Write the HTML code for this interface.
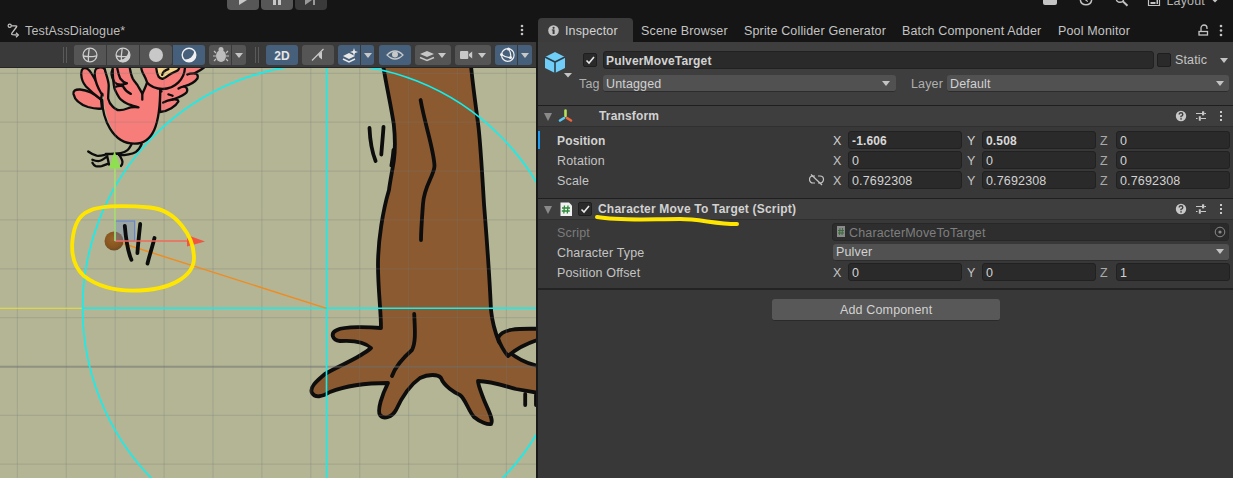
<!DOCTYPE html>
<html><head><meta charset="utf-8">
<style>
*{margin:0;padding:0;box-sizing:border-box}
html,body{width:1233px;height:478px;overflow:hidden;background:#151515;font-family:"Liberation Sans",sans-serif;font-size:12.5px;letter-spacing:0.15px;color:#c4c4c4}
.a{position:absolute}
.t{position:absolute;white-space:nowrap;line-height:14px}
.b{font-weight:bold;font-size:12px}
.btn{position:absolute;top:45px;height:20px;background:#585858;border-radius:3px}
.act{background:#46607c}
.fld{position:absolute;height:18px;background:#2a2a2a;border:1px solid #212121;border-radius:3px}
.dd{position:absolute;height:17px;background:#515151;border-bottom:1px solid #2c2c2c;border-radius:3px}
.lbl{position:absolute;white-space:nowrap;line-height:14px;color:#c4c4c4}
.ftxt{position:absolute;left:3px;top:1px;line-height:14px;color:#d2d2d2;white-space:nowrap}
.tri{position:absolute;width:0;height:0;border-left:4px solid transparent;border-right:4px solid transparent;border-top:5px solid #c4c4c4}
svg{position:absolute;overflow:hidden}
</style></head><body>
<!-- top bar -->
<div class="a" style="left:227px;top:-4px;width:32px;height:14px;background:#575757;border-radius:4px"></div>
<div class="a" style="left:261px;top:-4px;width:32px;height:14px;background:#575757;border-radius:4px"></div>
<div class="a" style="left:295px;top:-4px;width:32px;height:14px;background:#3a3a3a;border-radius:4px"></div>
<svg style="left:227px;top:0" width="100" height="10">
<path d="M 12,0 L 20,0 L 12,5 Z" fill="#c8c8c8"/>
<rect x="46" y="0" width="3" height="5" fill="#c8c8c8"/><rect x="51" y="0" width="3" height="5" fill="#c8c8c8"/>
<path d="M 78,0 L 85,0 L 78,5 Z" fill="#9a9a9a"/><rect x="86" y="0" width="2" height="5" fill="#9a9a9a"/>
</svg>
<svg style="left:1040px;top:0" width="193" height="10">
<path d="M 3,0 L 17,0 L 17,3 Q 17,5 15,5 L 5,5 Q 3,5 3,3 Z" fill="#c4c4c4"/>
<path d="M 40.3,0 A 5.8,5.8 0 0 0 51.7,0" fill="none" stroke="#c4c4c4" stroke-width="1.5"/><path d="M 45.5,0 L 47.5,1.5 L 46.5,0 Z" fill="#c4c4c4" stroke="#c4c4c4" stroke-width="1"/>
<circle cx="80" cy="-1.5" r="3.8" fill="none" stroke="#c4c4c4" stroke-width="1.4"/><path d="M 83,1.5 L 87.5,5.8" stroke="#c4c4c4" stroke-width="2"/>
<path d="M 108.5,0 V 5.5 H 119.5 V 0" fill="none" stroke="#c4c4c4" stroke-width="1.2"/><rect x="110.5" y="2" width="5" height="2" fill="#c4c4c4"/><rect x="116.5" y="0" width="1.5" height="4" fill="#c4c4c4"/>
<text x="126.5" y="4.5" font-family="Liberation Sans" font-size="12.5" letter-spacing="0.15" fill="#b4b4b4">Layout</text>
<path d="M 172.5,0 L 177.5,0 L 175,2.5 Z" fill="#c4c4c4"/>
</svg>

<!-- scene tab -->
<svg style="left:6px;top:23px" width="16" height="16">
<circle cx="3.7" cy="2.8" r="1.6" fill="none" stroke="#c4c4c4" stroke-width="1.2"/>
<path d="M 5.3,2.8 H 10 Q 11.2,2.8 10.5,4 L 5.9,10.2 Q 5.2,11.5 6.6,11.7 L 10.8,12" fill="none" stroke="#c4c4c4" stroke-width="1.3" stroke-linejoin="round"/>
<path d="M 10,9.8 L 12.3,12 L 10,14.2" fill="none" stroke="#c4c4c4" stroke-width="1.3"/>
</svg>
<div class="t" style="left:25px;top:24px;color:#bdbdbd">TestAssDialogue*</div>
<svg style="left:519px;top:24px" width="6" height="13"><circle cx="3" cy="2" r="1.3" fill="#c4c4c4"/><circle cx="3" cy="6" r="1.3" fill="#c4c4c4"/><circle cx="3" cy="10" r="1.3" fill="#c4c4c4"/></svg>

<!-- scene toolbar -->
<div class="a" style="left:0;top:42px;width:536px;height:26px;background:#3a3a3a;border-bottom:1px solid #262626"></div>
<div class="a" style="left:63px;top:47px;width:1px;height:16px;background:#5a5a5a"></div>
<div class="a" style="left:66px;top:47px;width:1px;height:16px;background:#5a5a5a"></div>
<div class="btn" style="left:74px;width:98px;background:#555555"></div>
<div class="btn act" style="left:173px;width:32px;border-radius:0 3px 3px 0"></div>
<div class="a" style="left:106px;top:45px;width:1px;height:20px;background:#3a3a3a"></div>
<div class="a" style="left:139px;top:45px;width:1px;height:20px;background:#3a3a3a"></div>
<div class="a" style="left:172px;top:45px;width:1px;height:20px;background:#3a3a3a"></div>
<div class="btn" style="left:74px;width:4px;border-radius:3px 0 0 3px;background:#555"></div>
<div class="btn" style="left:209px;width:37px;background:#555555"></div>
<div class="a" style="left:231px;top:45px;width:1px;height:20px;background:#3a3a3a"></div>
<div class="a" style="left:255px;top:47px;width:1px;height:16px;background:#5a5a5a"></div>
<div class="a" style="left:258px;top:47px;width:1px;height:16px;background:#5a5a5a"></div>
<div class="btn act" style="left:266px;width:32px"></div>
<div class="btn" style="left:302px;width:32px;background:#555555"></div>
<div class="btn act" style="left:338px;width:36px"></div>
<div class="a" style="left:360px;top:45px;width:1px;height:20px;background:#3a3a3a"></div>
<div class="btn act" style="left:379px;width:32px"></div>
<div class="btn" style="left:415px;width:36px;background:#555555"></div>
<div class="btn" style="left:455px;width:36px;background:#555555"></div>
<div class="btn act" style="left:495px;width:37px"></div>
<div class="a" style="left:517px;top:45px;width:1px;height:20px;background:#3a3a3a"></div>
<svg style="left:0;top:42px" width="536" height="25" viewBox="0 42 536 25">
<g fill="none" stroke="#cfcfcf" stroke-width="1.3">
<circle cx="90" cy="55" r="6.9"/><path d="M 83.3,56 Q 90,57.5 96.6,55.8 M 89.2,48.3 Q 88,55 88.4,61.7"/>
<circle cx="123" cy="55" r="6.9"/><path d="M 116.3,56 Q 123,57.5 129.6,55.8 M 122.2,48.3 Q 121,55 121.4,61.7"/>
</g>
<path d="M 128.3,50.5 A 6.9,6.9 0 0 1 117.5,59.7 A 9,9 0 0 0 128.3,50.5 Z" fill="#cfcfcf"/>
<circle cx="156" cy="55" r="7" fill="#c8c8c8"/>
<circle cx="189" cy="55" r="6.8" fill="none" stroke="#f0f0f0" stroke-width="1.4"/>
<path d="M 194.2,50.6 A 6.8,6.8 0 0 1 183.8,59.4 A 9,9 0 0 0 194.2,50.6 Z" fill="#f0f0f0"/>
<ellipse cx="221" cy="56" rx="5" ry="6" fill="#bdbdbd"/><circle cx="221" cy="49.5" r="2.5" fill="#bdbdbd"/>
<path d="M 214,51 L 216,53 M 228,51 L 226,53 M 213,56 H 216 M 229,56 H 226 M 214,61 L 216,59 M 228,61 L 226,59" stroke="#bdbdbd" stroke-width="1.2"/>
<path d="M 235,53 L 243,53 L 239,58 Z" fill="#c4c4c4"/>
<text x="282" y="59.5" text-anchor="middle" font-family="Liberation Sans" font-weight="bold" font-size="12" fill="#e6e6e6">2D</text>
<path d="M 312,60.5 L 323.5,49" stroke="#c8c8c8" stroke-width="1.3"/>
<path d="M 318,54.5 L 322,51.5 V 59.5 L 319.5,57.5 Z" fill="#c8c8c8"/>
<path d="M 343,56 L 349,53 L 355,56 L 349,59 Z" fill="#e8e8e8"/><path d="M 343,59 L 349,62 L 355,59" fill="none" stroke="#e8e8e8" stroke-width="1.5"/>
<path d="M 354,48 L 355,51 L 358,52 L 355,53 L 354,56 L 353,53 L 350,52 L 353,51 Z" fill="#e8e8e8"/>
<path d="M 364,53 L 372,53 L 368,58 Z" fill="#c8c8c8"/>
<path d="M 387,55 Q 395,47 403,55 Q 395,63 387,55 Z" fill="none" stroke="#c8c8c8" stroke-width="1.2"/><circle cx="395" cy="54.5" r="3" fill="#c8c8c8"/>
<path d="M 420,54 L 427,51 L 434,54 L 427,57 Z" fill="#c8c8c8"/><path d="M 420,57.5 L 427,60.5 L 434,57.5" fill="none" stroke="#c8c8c8" stroke-width="1.6"/>
<path d="M 438,53 L 446,53 L 442,58 Z" fill="#c8c8c8"/>
<rect x="460" y="51" width="8.3" height="8" rx="1" fill="#c8c8c8"/><path d="M 469,54 L 472.2,51.5 V 58.5 L 469,56 Z" fill="#c8c8c8"/>
<path d="M 478,53 L 486,53 L 482,58 Z" fill="#c8c8c8"/>
<g fill="none" stroke="#f0f0f0" stroke-width="1.2"><circle cx="507.8" cy="55" r="6.3"/><path d="M 501.5,54.5 Q 506,58 510.5,57.5 M 508.5,49 Q 511.5,53 510.5,57.5"/></g>
<circle cx="508.5" cy="49" r="1.5" fill="#f0f0f0"/><circle cx="501.5" cy="54.5" r="1.5" fill="#f0f0f0"/><circle cx="510.5" cy="57.5" r="1.5" fill="#f0f0f0"/>
<path d="M 521,53 L 529,53 L 525,58 Z" fill="#c8c8c8"/>
</svg>
<svg class="a" style="left:0;top:68px" width="536" height="410" viewBox="0 68 536 410">
<rect x="0" y="67" width="536" height="411" fill="#b3b595"/>
<!-- tree -->
<g stroke="#0d0d0d" stroke-width="3.8" stroke-linejoin="round" stroke-linecap="round">
<path fill="#8b5a30" d="M 381.5,55 C 385,80 391,105 393.8,124.6 C 395.5,140 395,152 393.8,161 C 392,172 390,182 389,190 C 383,210 378,240 378,265 C 378,290 381,310 381,328 C 370,327 345,326 337,330 C 330,333 332,340 340,341 C 355,340 365,342 371,348 C 360,358 340,365 325,374 C 318,380 309,387 312,393 C 315,398 322,397 330,392 C 345,386 365,383 388,383 C 382,395 377,410 380,415 C 384,420 392,417 396,410 C 402,397 410,385 420,378 C 428,374 438,374 441,378 C 444,386 455,393 460,395 C 466,400 468,410 474,417 C 480,422 488,425 491,424 C 494,420 488,410 484,400 C 481,392 478,385 478,381 C 490,381 505,386 516,389 L 545,394 L 545,367 C 525,365 510,355 499,342 C 495,332 492,320 491,310 C 489,265 486,230 484,204 C 482,170 479,130 478,123 C 475,100 472,80 470,55 Z"/>
<path fill="#8b5a30" d="M 498,338 C 502,329 515,328 545,329 L 545,338 C 528,342 515,350 508,356 C 503,350 500,344 498,338 Z"/>
<path fill="none" d="M 420.6,100 C 425,125 434,150 434.5,166 C 434,176 424,186 423,204 C 422,218 421,230 421,240"/>
<path fill="none" d="M 414.2,313.8 C 415,330 416,342 412,350 C 404,357 396,365 392,376"/>
<path fill="none" d="M 369.5,128 C 370,140 372,152 375.6,161 M 383.5,126.8 C 383,135 382,145 381.3,154.5 M 393.5,150 C 393,157 392,162 391.4,165.5"/>
<path fill="none" d="M 525.2,394 L 525.2,405 M 536,395 L 536,405"/>
</g>
<!-- bird -->
<g stroke="#0d0d0d" stroke-width="2.3" stroke-linejoin="round" stroke-linecap="round" fill="#f77d7b">
<path d="M 160,112 C 168,111.5 176,106 178.4,101.5 C 178.5,99.5 175,99.2 172.6,99.5 C 178,97.5 184,95.5 186.5,92.5 C 188,90 187,87 184.1,86.4 C 189,85 195,82 197.4,78.5 C 198.5,75.5 197,73.5 194.6,73.3 C 198,71.5 201,70 204,67.5 L 204,55 L 160,55 Z"/>
<path fill="none" d="M 172.6,99.5 C 169,100 166,101 163.2,102.6 M 168.4,94.3 C 170,94.6 171.5,95.2 172.6,95.8 M 184.1,86.4 C 182,86.8 180,87.5 178.5,88.5 M 194.6,73.3 C 192,73.3 189,73.5 187.3,74.5"/>
<path d="M 101,99.5 C 95,94 87,90 80,89.5 C 75,89.3 73,91 73.5,94 C 74.5,99 79,104 88,107 C 93,108.5 98,109 102,108.6 Z"/>
<path d="M 102,93.5 C 99,87 95,79 91.5,73.5 C 89.5,70 87.5,68 84.5,68.2 C 81.5,68.5 81,71 81.3,75 C 81.5,79 83,83 86,86.5 C 90,90.5 95,95 101,99.5 Z"/>
<path d="M 101,93 C 98,88 95.5,82 94.8,76 C 94.5,72 95,69 97,68.2 C 99.5,67.2 103,67.5 104.8,69 C 106.5,72 108,77 108.5,85 C 108.8,90 108.5,95 108.2,98.5 Z"/>
<path stroke="none" d="M 104,80 C 101,115 113,143.6 134.6,143.6 C 153,143.6 160.2,125 160.2,96 C 160,75 150,60 135,60 L 110,60 Z"/>
<path fill="none" d="M 102.2,100 C 102.5,118 112,143.6 134.6,143.6 C 153,143.6 160.2,125 160.2,88"/>
<path stroke="none" d="M 112,60 L 112,100 L 140,108 L 143,96 L 130,60 Z"/>
<path fill="#b3b595" d="M 104.5,58 L 104.5,68 C 106,75 108.5,80 108.7,85.2 C 108.8,90 108,95 108.2,98.7 C 109,102 111,105 112.5,106.4 C 115,109 117,110.2 119.2,110.2 C 124,110.5 128,108 130.8,107.3 C 134,107 136,107 138.5,107.3 C 134,106 130,105 126.9,103.5 C 122,101 120,99 119.2,97.7 C 117,94 115,90 114.4,88.1 C 113,82 112.5,75 112.5,58 Z"/>
<path fill="none" d="M 112.5,69.8 C 111,72 111,76 114.4,82.3 C 117,85 121,85.5 126.9,83.3 M 114.4,87.2 C 117,86.2 121,85.5 123,86.2 C 124,88 125,91 130.8,93.9 M 117.3,68.5 C 118,72 119,76 120.2,78.5 C 122,81 124,82.5 126.9,83.3"/>
<circle cx="162.5" cy="66.5" r="22.5"/>
<path fill="#b3b595" d="M 129.8,58 L 129.8,68 C 130.5,72 131.5,76 132.7,78.5 C 134,81 136,83 137.5,85.2 C 139,88 141,91 142.3,93.9 C 144,90 146,86 147.1,82.3 C 146,79 145,77 144.2,75.6 C 142,72 141,70 140.4,58 Z"/>
<path fill="none" d="M 142.3,93.9 L 142.3,99.7 M 161,91 L 161.5,91.5"/>
<path fill="#f5d58c" d="M 155.9,62 C 156,68 157,74 158.5,76.5 C 160,78.5 162,79 163.2,78.6 C 165,78 167,76.5 168.4,75.4 C 172,73 176,71.5 177.9,70.2 C 179,69 180,67 180,62 Z"/>
<path fill="none" d="M 162.2,74.9 C 162.5,73 163.5,71.8 164.3,71.2 C 166,70 167,69.5 168.4,69.1"/>
<path fill="none" d="M 131.7,144 C 130,147 129,149 127.5,150.2 C 124,153 120,154 105.8,154 M 141.7,144 C 140,148 138,150.5 135.9,151.9 C 132,154 128,155.2 119,155.2 M 88.2,151.5 C 91,153.5 94,155 96.6,155.7 C 99,156 102,155.5 104.9,154.8 M 92.4,159.8 C 94,160.5 96,161.1 98.2,161.1 C 101,161 103,160 107.4,156 M 92.4,162.8 C 93,164 94,165.5 95.7,166.1 C 98,166.5 100,166.3 101.6,166.1 C 104,165.5 106,164.5 108.3,163.6 M 120,156 C 121,158 122.5,160 122.5,162 C 122.5,164 121.5,165.5 120.8,166.1 M 107.4,157 L 109,164.5"/>
</g>
<!-- grid -->
<g stroke="#7a7a7a" stroke-opacity="0.24" stroke-width="1.2">
<path d="M 17.4,67 V 478 M 66.3,67 V 478 M 115.2,67 V 478 M 164.1,67 V 478 M 213,67 V 478 M 261.9,67 V 478 M 310.8,67 V 478 M 359.7,67 V 478 M 408.6,67 V 478 M 457.5,67 V 478 M 506.4,67 V 478"/>
<path d="M 0,73.4 H 536 M 0,122.2 H 536 M 0,171.1 H 536 M 0,219.9 H 536 M 0,268.8 H 536 M 0,317.6 H 536 M 0,415.3 H 536 M 0,464.1 H 536"/>
</g>
<path d="M 0,366.8 H 536" stroke="#6e6e6e" stroke-opacity="0.5" stroke-width="2"/>
<!-- gizmos -->
<path d="M 0,308.3 H 82.6" stroke="#e8e23a" stroke-width="1.1"/>
<path d="M 82.6,308.3 H 536 M 326.5,67 V 478" stroke="#0ff0f0" stroke-width="1.6"/>
<circle cx="327" cy="308.3" r="244.4" fill="none" stroke="#0ff0f0" stroke-width="1.6"/>
<path d="M 115,241 L 326.5,308.3" stroke="#f28a1c" stroke-width="1.4"/>
<defs><radialGradient id="bg1" cx="0.45" cy="0.4" r="0.6"><stop offset="0" stop-color="#9a6428"/><stop offset="0.75" stop-color="#85541f"/><stop offset="1" stop-color="#6d4a25"/></radialGradient></defs><circle cx="114" cy="241" r="9.5" fill="url(#bg1)"/>
<rect x="115" y="221" width="19.7" height="20" fill="#6f8cc8" fill-opacity="0.35" stroke="#5b7fd6" stroke-width="1"/>
<g stroke="#0d0d0d" stroke-width="3.8" stroke-linecap="round" fill="none">
<path d="M 124.8,226 C 126,240 128,252 131.4,259.8"/>
<path d="M 140.2,224 C 139,235 138,245 137.4,253.2"/>
<path d="M 154.5,238 C 152,248 149,257 147.5,263.6"/>
</g>
<path d="M 115,241 H 188" stroke="#f26a5a" stroke-width="1.6"/>
<path d="M 187,235 L 205,241.5 L 187,246.6 Z" fill="#f2553f"/>
<path d="M 115,168 V 241" stroke="#a8e070" stroke-width="1.6"/>
<path d="M 114.5,151 L 120.8,168.6 L 109.1,168.6 Z" fill="#8ee050"/>
<!-- annotations -->
<path d="M 150,207.5 C 120,205 98,206 88,211.5 C 80,215 74,225 72.5,240 C 71,255 75,268 84,276 C 97,286 115,290.5 132.5,290.6 C 152,290.5 168,287 178,281 C 190,274 194,266 194,258 C 194,236 176,210 150,207.5 Z" fill="none" stroke="#ffe600" stroke-width="3.8" stroke-linejoin="round"/>
</svg>
<!-- inspector tabs -->
<div class="a" style="left:538px;top:18px;width:95px;height:24px;background:#3c3c3c;border-radius:4px 4px 0 0"></div>
<svg style="left:548px;top:25px" width="12" height="12"><circle cx="5.5" cy="5.5" r="5.3" fill="#c4c4c4"/><rect x="4.6" y="4.5" width="2" height="4.5" fill="#3c3c3c"/><circle cx="5.6" cy="2.8" r="1.1" fill="#3c3c3c"/><rect x="3.8" y="4.5" width="2" height="1" fill="#3c3c3c"/></svg>
<div class="t" style="left:565px;top:24px;color:#d2d2d2">Inspector</div>
<div class="t" style="left:641px;top:24px">Scene Browser</div>
<div class="t" style="left:744px;top:24px">Sprite Collider Generator</div>
<div class="t" style="left:902px;top:24px">Batch Component Adder</div>
<div class="t" style="left:1058px;top:24px">Pool Monitor</div>
<svg style="left:1196px;top:23px" width="36" height="16">
<path d="M 5,8 V 5 A 3,3 0 0 1 11,5 V 6" fill="none" stroke="#c4c4c4" stroke-width="1.3"/>
<rect x="3" y="8.5" width="8.5" height="3.5" fill="none" stroke="#c4c4c4" stroke-width="1.3"/>
<circle cx="25" cy="3" r="1.3" fill="#c4c4c4"/><circle cx="25" cy="7.5" r="1.3" fill="#c4c4c4"/><circle cx="25" cy="12" r="1.3" fill="#c4c4c4"/>
</svg>

<!-- inspector body -->
<div class="a" style="left:536px;top:42px;width:2px;height:436px;background:#191919"></div>
<div class="a" style="left:538px;top:42px;width:695px;height:436px;background:#383838"></div>
<div class="a" style="left:538px;top:42px;width:695px;height:63px;background:#3e3e3e"></div>
<div class="a" style="left:538px;top:105px;width:695px;height:1px;background:#1f1f1f"></div>
<div class="a" style="left:538px;top:106px;width:695px;height:20px;background:#3e3e3e"></div>
<div class="a" style="left:538px;top:126px;width:695px;height:1px;background:#303030"></div>

<!-- GameObject header -->
<svg style="left:544px;top:51px" width="30" height="28">
<path d="M 11,1 L 21,6 L 21,17 L 11,22 L 1,17 L 1,6 Z" fill="#6fcdf8"/>
<path d="M 1,6 L 11,11 L 21,6 M 11,11 V 22" fill="none" stroke="#2c3e4a" stroke-width="1.6"/>
<path d="M 20,22 L 28,22 L 24,26.5 Z" fill="#c4c4c4"/>
</svg>
<div class="a" style="left:583px;top:53px;width:14px;height:14px;background:#2a2a2a;border:1px solid #1e1e1e;border-radius:2px"></div>
<svg style="left:583px;top:53px" width="14" height="14"><path d="M 3.5,7.5 L 6,10 L 11,4" fill="none" stroke="#e8e8e8" stroke-width="1.6"/></svg>
<div class="fld" style="left:603px;top:51px;width:551px;height:18px"></div>
<div class="t b" style="left:606px;top:54px;color:#d2d2d2">PulverMoveTarget</div>
<div class="a" style="left:1157px;top:53px;width:14px;height:14px;background:#2a2a2a;border:1px solid #1e1e1e;border-radius:2px"></div>
<div class="t" style="left:1175px;top:53px">Static</div>
<div class="tri" style="left:1220px;top:58px"></div>
<div class="t" style="left:579px;top:77px;color:#b0b0b0">Tag</div>
<div class="dd" style="left:603px;top:75px;width:293px;height:17px"></div>
<div class="t" style="left:606px;top:77px;color:#d2d2d2">Untagged</div>
<div class="tri" style="left:882px;top:81px"></div>
<div class="t" style="left:911px;top:77px;color:#b0b0b0">Layer</div>
<div class="dd" style="left:947px;top:75px;width:282px;height:17px"></div>
<div class="t" style="left:950px;top:77px;color:#d2d2d2">Default</div>
<div class="tri" style="left:1216px;top:81px"></div>

<!-- Transform header -->
<div class="a" style="left:544px;top:113px;width:0;height:0;border-left:4.5px solid transparent;border-right:4.5px solid transparent;border-top:8px solid #8a8a8a"></div>
<svg style="left:558px;top:108px" width="16" height="16">
<path d="M 7.5,2.5 V 8" stroke="#b5e05a" stroke-width="2.6" stroke-linecap="round"/>
<path d="M 6,10 L 2,12.5" stroke="#5cc8f5" stroke-width="2.6" stroke-linecap="round"/>
<path d="M 9,10 L 13,12.5" stroke="#f0663c" stroke-width="2.6" stroke-linecap="round"/>
</svg>
<div class="t b" style="left:599px;top:109px;color:#d2d2d2">Transform</div>
<svg style="left:1174px;top:109px" width="56" height="14">
<circle cx="7" cy="7" r="5.2" fill="#c8c8c8"/><path d="M 5.2,5.6 Q 5.2,3.8 7,3.8 Q 8.8,3.8 8.8,5.4 Q 8.8,6.5 7,7.3 V 8.3" fill="none" stroke="#3e3e3e" stroke-width="1.4"/><rect x="6.3" y="9.2" width="1.5" height="1.4" fill="#3e3e3e"/>
<path d="M 22,4.5 H 28 M 30.2,4.5 H 32 M 22,9.5 H 23.5 M 26.8,9.5 H 32" stroke="#c8c8c8" stroke-width="1.2"/><rect x="28" y="2.3" width="2.2" height="4.1" fill="#c8c8c8"/><rect x="24.8" y="7.3" width="2" height="4.4" fill="#c8c8c8"/>
<rect x="46" y="2" width="2" height="2" fill="#c8c8c8"/><rect x="46" y="6" width="2" height="2" fill="#c8c8c8"/><rect x="46" y="10" width="2" height="2" fill="#c8c8c8"/>
</svg>

<!-- Transform rows -->
<div class="a" style="left:538px;top:131px;width:2px;height:18px;background:#1e9df0"></div>
<div class="t b" style="left:557px;top:134px;color:#d2d2d2">Position</div>
<div class="t" style="left:557px;top:154px">Rotation</div>
<div class="t" style="left:557px;top:174px">Scale</div>
<svg style="left:809px;top:174px" width="16" height="12"><path d="M 6,2 H 4 A 3.5,3.5 0 0 0 4,9 H 6 M 9,2 H 11 A 3.5,3.5 0 0 1 11,9 H 9" fill="none" stroke="#c4c4c4" stroke-width="1.2"/><path d="M 2,0.5 L 13,11" stroke="#c4c4c4" stroke-width="1.2"/></svg>

<div class="t" style="left:833px;top:134px;color:#d2d2d2">X</div>
<div class="fld" style="left:848px;top:131px;width:114px"></div>
<div class="t b" style="left:852px;top:134px;color:#d8d8d8">-1.606</div>
<div class="t" style="left:967px;top:134px;color:#d2d2d2">Y</div>
<div class="fld" style="left:982px;top:131px;width:114px"></div>
<div class="t b" style="left:986px;top:134px;color:#d8d8d8">0.508</div>
<div class="t" style="left:1100px;top:134px;color:#aaaaaa">Z</div>
<div class="fld" style="left:1116px;top:131px;width:114px"></div>
<div class="t" style="left:1120px;top:134px;color:#d2d2d2">0</div>

<div class="t" style="left:833px;top:154px">X</div>
<div class="fld" style="left:848px;top:151px;width:114px"></div>
<div class="t" style="left:852px;top:154px;color:#d2d2d2">0</div>
<div class="t" style="left:967px;top:154px">Y</div>
<div class="fld" style="left:982px;top:151px;width:114px"></div>
<div class="t" style="left:986px;top:154px;color:#d2d2d2">0</div>
<div class="t" style="left:1100px;top:154px;color:#aaaaaa">Z</div>
<div class="fld" style="left:1116px;top:151px;width:114px"></div>
<div class="t" style="left:1120px;top:154px;color:#d2d2d2">0</div>

<div class="t" style="left:833px;top:174px">X</div>
<div class="fld" style="left:848px;top:171px;width:114px"></div>
<div class="t" style="left:852px;top:174px;color:#d2d2d2">0.7692308</div>
<div class="t" style="left:967px;top:174px">Y</div>
<div class="fld" style="left:982px;top:171px;width:114px"></div>
<div class="t" style="left:986px;top:174px;color:#d2d2d2">0.7692308</div>
<div class="t" style="left:1100px;top:174px;color:#aaaaaa">Z</div>
<div class="fld" style="left:1116px;top:171px;width:114px"></div>
<div class="t" style="left:1120px;top:174px;color:#d2d2d2">0.7692308</div>

<!-- Character Move header -->
<div class="a" style="left:538px;top:198px;width:695px;height:1px;background:#1f1f1f"></div>
<div class="a" style="left:538px;top:199px;width:695px;height:20px;background:#3e3e3e"></div>
<div class="a" style="left:538px;top:219px;width:695px;height:1px;background:#2f2f2f"></div>
<div class="a" style="left:544px;top:206px;width:0;height:0;border-left:4.5px solid transparent;border-right:4.5px solid transparent;border-top:8px solid #8a8a8a"></div>
<svg style="left:560px;top:202px" width="13" height="15"><path d="M 0.5,0.5 H 9 L 12,3.5 V 14 H 0.5 Z" fill="#f0f0f0"/><path d="M 4.5,3.5 L 3.8,11.5 M 8,3.5 L 7.3,11.5 M 2,6 H 10 M 1.8,9 H 9.8" stroke="#2e8a3a" stroke-width="1.3"/></svg>
<div class="a" style="left:578px;top:202px;width:14px;height:14px;background:#2a2a2a;border:1px solid #1e1e1e;border-radius:2px"></div>
<svg style="left:578px;top:202px" width="14" height="14"><path d="M 3.5,7.5 L 6,10 L 11,4" fill="none" stroke="#e8e8e8" stroke-width="1.6"/></svg>
<div class="t b" style="left:598px;top:202px;color:#d2d2d2;letter-spacing:0.2px">Character Move To Target (Script)</div>
<svg style="left:1174px;top:202px" width="56" height="14">
<circle cx="7" cy="7" r="5.2" fill="#c8c8c8"/><path d="M 5.2,5.6 Q 5.2,3.8 7,3.8 Q 8.8,3.8 8.8,5.4 Q 8.8,6.5 7,7.3 V 8.3" fill="none" stroke="#3e3e3e" stroke-width="1.4"/><rect x="6.3" y="9.2" width="1.5" height="1.4" fill="#3e3e3e"/>
<path d="M 22,4.5 H 28 M 30.2,4.5 H 32 M 22,9.5 H 23.5 M 26.8,9.5 H 32" stroke="#c8c8c8" stroke-width="1.2"/><rect x="28" y="2.3" width="2.2" height="4.1" fill="#c8c8c8"/><rect x="24.8" y="7.3" width="2" height="4.4" fill="#c8c8c8"/>
<rect x="46" y="2" width="2" height="2" fill="#c8c8c8"/><rect x="46" y="6" width="2" height="2" fill="#c8c8c8"/><rect x="46" y="10" width="2" height="2" fill="#c8c8c8"/>
</svg>

<!-- Character rows -->
<div class="t" style="left:557px;top:226px;color:#7c7c7c">Script</div>
<div class="fld" style="left:832px;top:223px;width:397px;background:#2e2e2e;border-color:#272727"></div>
<svg style="left:837px;top:226px" width="10" height="12"><rect x="0" y="0" width="8" height="11" fill="#8a8a8a"/><path d="M 3,2 L 2.5,9 M 5.5,2 L 5,9 M 1,4.5 H 7 M 1,7 H 7" stroke="#3a6a3e" stroke-width="1"/></svg>
<div class="t" style="left:849px;top:226px;color:#7f7f7f">CharacterMoveToTarget</div>
<div class="a" style="left:1210px;top:224px;width:18px;height:16px;background:#2a2a2a"></div>
<svg style="left:1213px;top:225px" width="14" height="14"><circle cx="7" cy="7" r="4.8" fill="none" stroke="#8a8a8a" stroke-width="1"/><circle cx="7" cy="7" r="1.6" fill="#8a8a8a"/></svg>
<div class="t" style="left:557px;top:246px">Character Type</div>
<div class="dd" style="left:833px;top:244px;width:396px;height:17px"></div>
<div class="t" style="left:836px;top:245px;color:#d2d2d2">Pulver</div>
<div class="tri" style="left:1216px;top:249px"></div>
<div class="t" style="left:557px;top:266px">Position Offset</div>
<div class="t" style="left:833px;top:266px">X</div>
<div class="fld" style="left:848px;top:263px;width:114px"></div>
<div class="t" style="left:852px;top:266px;color:#d2d2d2">0</div>
<div class="t" style="left:967px;top:266px">Y</div>
<div class="fld" style="left:982px;top:263px;width:114px"></div>
<div class="t" style="left:986px;top:266px;color:#d2d2d2">0</div>
<div class="t" style="left:1100px;top:266px;color:#aaaaaa">Z</div>
<div class="fld" style="left:1116px;top:263px;width:114px"></div>
<div class="t" style="left:1120px;top:266px;color:#d2d2d2">1</div>

<div class="a" style="left:538px;top:288px;width:695px;height:2px;background:#232323"></div>
<div class="a" style="left:772px;top:299px;width:228px;height:22px;background:#585858;border-radius:3px;border-bottom:1px solid #2a2a2a"></div>
<div class="t" style="left:840px;top:303px;color:#d2d2d2">Add Component</div>

<!-- yellow underline annotation -->
<svg style="left:590px;top:210px" width="160" height="24" viewBox="590 210 160 24"><path d="M 597,217 C 620,221 650,219 680,219 C 700,219 715,224 737,224" fill="none" stroke="#ffe600" stroke-width="4" stroke-linecap="round"/></svg>
</body></html>
